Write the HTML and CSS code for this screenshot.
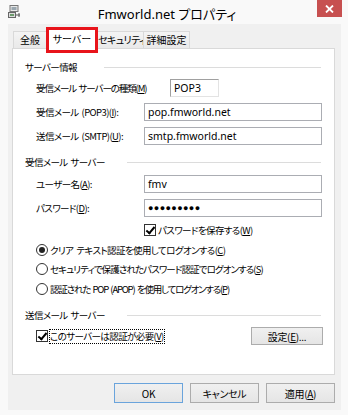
FILE: index.html
```html
<!DOCTYPE html>
<html lang="ja">
<head>
    <meta charset="UTF-8">
    <title>Fmworld.net プロパティ</title>
    <link rel="stylesheet" href="styles.css">
</head>
<body>
    <div class="window">
        <!-- Title bar -->
        <div class="titlebar">
            <svg class="app-icon" width="13" height="13" viewBox="0 0 13 13">
                <rect x="2" y="0.5" width="8" height="6" fill="#e8e8e8" stroke="#777"/>
                <rect x="3.5" y="2" width="5" height="3" fill="#9aa7b0"/>
                <rect x="0.5" y="7.5" width="7" height="5" fill="#dcdcdc" stroke="#666"/>
                <rect x="2" y="9" width="4" height="2" fill="#6b9a6b"/>
                <path d="M8 10 H12 M11 8 V12" stroke="#555" fill="none"/>
            </svg>
            <div class="title">Fmworld.net プロパティ</div>
            <div class="close">
                <svg width="9" height="8" viewBox="0 0 9 8">
                    <path d="M1 0.5 L8 7.5 M8 0.5 L1 7.5" stroke="#fff" stroke-width="1.8"/>
                </svg>
            </div>
        </div>

        <div class="client">
            <!-- Tabs -->
            <div class="tabs">
                <div class="tab t-general">全般</div>
                <div class="tab t-server active">サーバー</div>
                <div class="tab t-security">セキュリティ</div>
                <div class="tab t-advanced">詳細設定</div>
                <div class="mark"></div>
            </div>

            <div class="panel">
                <!-- Server info -->
                <div class="group g1"><span>サーバー情報</span></div>
                <div class="row r-type">
                    <span class="label">受信メール サーバーの種類(<u>M</u>)</span>
                    <div class="static">POP3</div>
                </div>
                <div class="row r-field">
                    <span class="label wide">受信メール (POP3)(<u>I</u>):</span>
                    <div class="input">pop.fmworld.net</div>
                </div>
                <div class="row r-field">
                    <span class="label wide">送信メール (SMTP)(<u>U</u>):</span>
                    <div class="input">smtp.fmworld.net</div>
                </div>

                <!-- Incoming server -->
                <div class="group g2"><span>受信メール サーバー</span></div>
                <div class="row r-user">
                    <span class="label wide">ユーザー名(<u>A</u>):</span>
                    <div class="input">fmv</div>
                </div>
                <div class="row r-field">
                    <span class="label wide">パスワード(<u>D</u>):</span>
                    <div class="input dots">●●●●●●●●●</div>
                </div>
                <div class="row r-save">
                    <span class="check checked"></span>
                    <span>パスワードを保存する(<u>W</u>)</span>
                </div>
                <div class="row r-radio first">
                    <span class="radio on"></span>
                    <span>クリア テキスト認証を使用してログオンする(<u>C</u>)</span>
                </div>
                <div class="row r-radio second">
                    <span class="radio"></span>
                    <span>セキュリティで保護されたパスワード認証でログオンする(<u>S</u>)</span>
                </div>
                <div class="row r-radio last">
                    <span class="radio"></span>
                    <span>認証された POP (APOP) を使用してログオンする(<u>P</u>)</span>
                </div>

                <!-- Outgoing server -->
                <div class="group g3"><span>送信メール サーバー</span></div>
                <div class="row r-auth">
                    <span class="check checked"></span>
                    <span class="focus">このサーバーは認証が必要(<u>V</u>)</span>
                    <button class="btn settings">設定(<u>E</u>)...</button>
                </div>
            </div>

            <!-- Dialog buttons -->
            <div class="actions">
                <button class="btn default">OK</button>
                <button class="btn">キャンセル</button>
                <button class="btn">適用(<u>A</u>)</button>
            </div>
        </div>
    </div>
</body>
</html>
```

FILE: styles.css
```css
* {
    box-sizing: border-box;
}
body {
    margin: 0;
    font-family: "Noto Sans CJK JP", "Noto Sans", sans-serif;
    font-size: 9.5px;
    font-feature-settings: "palt";
    color: #000;
    background: #fafafa;
}
u {
    text-decoration: underline;
    text-underline-offset: 1px;
}
.window {
    width: 348px;
    height: 415px;
    background: #f9f9f9;
    overflow: hidden;
}
.titlebar {
    height: 24px;
    display: flex;
    align-items: flex-start;
}
.app-icon {
    margin: 5px 0 0 8px;
}
.title {
    flex: 1;
    text-align: center;
    font-size: 13px;
    line-height: 16px;
    margin-top: 6px;
    margin-left: -4px;
    font-family: "Noto Sans", "Noto Sans CJK JP", sans-serif;
}
.close {
    width: 25px;
    height: 17px;
    margin-right: 6px;
    background: #c75050;
    display: flex;
    align-items: center;
    justify-content: center;
}
.client {
    margin-left: 8px;
    width: 333px;
    height: 386px;
    background: #f0f0f0;
}
.tabs {
    position: relative;
    height: 24px;
    padding-left: 5px;
    display: flex;
    align-items: flex-end;
    font-size: 10px;
}
.tab {
    height: 17px;
    line-height: 16px;
    padding: 0;
    border: 1px solid #d9d9d9;
    border-bottom: none;
    margin-right: -1px;
    background: linear-gradient(#f4f4f4, #e9e9e9);
    text-align: center;
    white-space: nowrap;
}
.t-general { width: 34px; }
.t-server { width: 52px; }
.t-security { width: 47px; letter-spacing: -0.6px; }
.t-advanced { width: 47px; }
.tab.active {
    height: 21px;
    line-height: 19px;
    background: #fff;
    position: relative;
    z-index: 1;
    margin-bottom: -1px;
}
.mark {
    position: absolute;
    left: 38px;
    top: 3px;
    width: 52px;
    height: 26px;
    border: 3px solid #e8141b;
    z-index: 2;
}
.panel {
    margin-left: 4px;
    width: 323px;
    height: 327px;
    border: 1px solid #d9d9d9;
    background: #fff;
    padding: 10px 11px 0 12px;
    letter-spacing: -0.6px;
    word-spacing: 1.5px;
}
.group {
    display: flex;
    align-items: center;
    height: 16px;
    white-space: nowrap;
    margin-right: 2px;
}
.group::after {
    content: "";
    flex: 1;
    border-top: 1px solid #dcdcdc;
    margin-left: 12px;
}
.group.g1::after { margin-left: 27px; }
.group.g2::after { margin-left: 22px; }
.group.g3::after { margin-left: 22px; }
.group.g2 { margin-top: 9px; }
.group.g3 { margin-top: 10px; }
.row {
    display: flex;
    align-items: center;
    padding-left: 11px;
    white-space: nowrap;
}
.label.wide {
    width: 108px;
}
.r-type {
    margin-top: 4px;
    height: 18px;
}
.r-type .label {
    width: 134px;
    letter-spacing: -1.1px;
}
.static {
    width: 49px;
    height: 18px;
    line-height: 16px;
    padding-left: 3px;
    border: 1px solid;
    border-color: #a0a0a0 #e3e3e3 #e3e3e3 #a0a0a0;
    font-family: "Noto Sans", sans-serif;
    font-size: 10.5px;
    letter-spacing: 0;
}
.r-field {
    margin-top: 6px;
    height: 18px;
}
.r-user {
    margin-top: 5px;
    height: 18px;
}
.input {
    width: 178px;
    height: 18px;
    line-height: 16px;
    padding-left: 3px;
    border: 1px solid #abadb3;
    font-family: "Noto Sans", sans-serif;
    font-size: 10.5px;
    letter-spacing: 0;
}
.input.dots {
    font-size: 9px;
    letter-spacing: 0.4px;
}
.r-save {
    margin-top: 6px;
    height: 14px;
    padding-left: 119px;
}
.check {
    width: 12px;
    height: 12px;
    border: 1px solid #333;
    background: #fff;
    margin-right: 2px;
    position: relative;
    flex: none;
}
.check.checked::after {
    content: "";
    position: absolute;
    left: 3px;
    top: 0;
    width: 3px;
    height: 7px;
    border: solid #000;
    border-width: 0 2px 2px 0;
    transform: rotate(40deg);
}
.r-radio {
    height: 16px;
    margin-top: 3px;
}
.r-radio.first { margin-top: 5px; }
.r-radio.second { letter-spacing: -0.9px; }
.r-radio.last {
    margin-top: 4px;
    letter-spacing: -1.2px;
}
.radio {
    width: 12px;
    height: 12px;
    border: 1px solid #333;
    border-radius: 50%;
    margin-right: 2px;
    background: #fff;
    display: flex;
    align-items: center;
    justify-content: center;
    flex: none;
}
.radio.on::after {
    content: "";
    width: 6px;
    height: 6px;
    border-radius: 50%;
    background: #222;
}
.r-auth {
    margin-top: 4px;
    height: 18px;
}
.focus {
    outline: 1px dotted #000;
    line-height: 13px;
}
.btn {
    font-family: inherit;
    font-size: 10px;
    font-feature-settings: "palt";
    letter-spacing: -0.3px;
    word-spacing: 0;
    color: #000;
    height: 19px;
    padding: 0;
    border: 1px solid #acacac;
    background: linear-gradient(#f0f0f0, #e5e5e5);
}
.btn.settings {
    margin-left: auto;
    width: 72px;
    height: 18px;
}
.actions {
    display: flex;
    justify-content: flex-end;
    gap: 7px;
    margin-top: 8px;
    padding-right: 6px;
}
.actions .btn {
    width: 69px;
    height: 20px;
}
.btn.default {
    border-color: #6aa4dc;
}
```
